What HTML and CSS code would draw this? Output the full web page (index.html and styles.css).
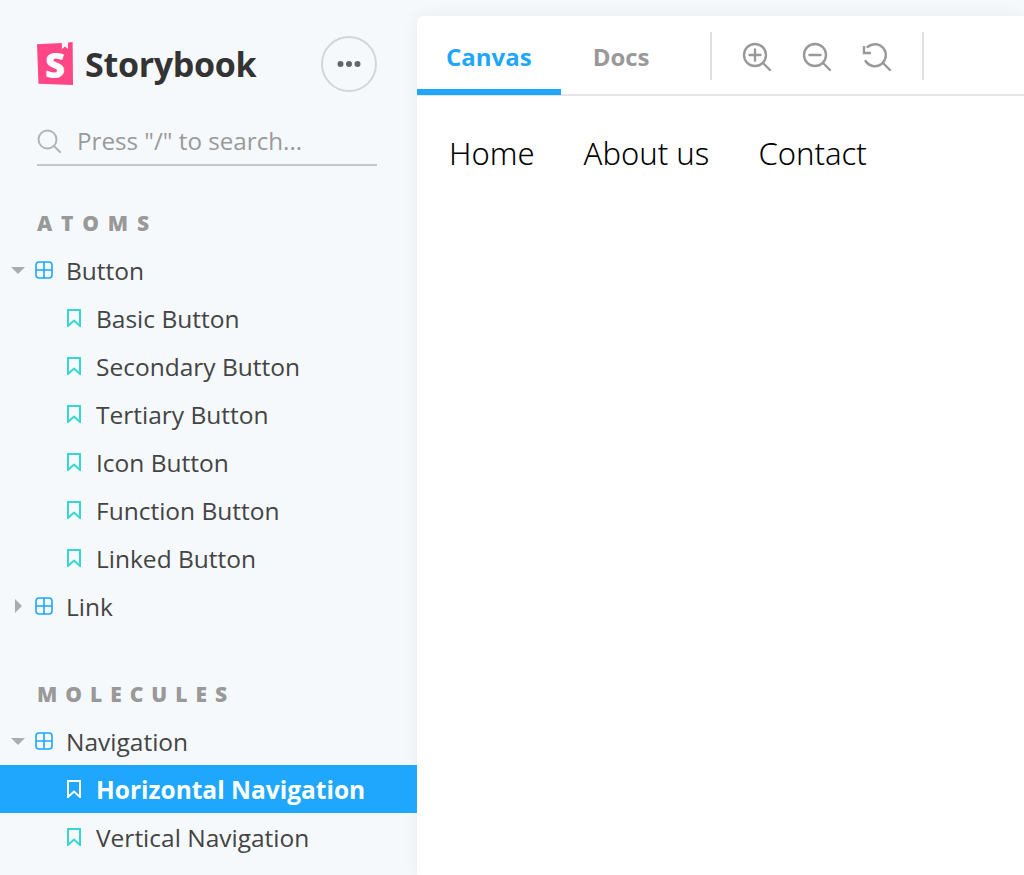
FILE: index.html
```html
<!DOCTYPE html>
<html lang="en">
<head>
    <meta charset="UTF-8">
    <meta name="viewport" content="width=device-width, initial-scale=1.0">
    <title>Storybook</title>
    <link rel="stylesheet" href="styles.css">
</head>
<body>
    <aside class="sidebar">
        <div class="brand">
            <div class="logo">
                <div class="logo-mark">S</div>
                <span class="logo-name">Storybook</span>
            </div>
            <button class="menu-btn">
                <svg width="24" height="6" viewBox="0 0 24 6"><circle cx="3.500" cy="3" r="3" fill="#666"/><circle cx="12" cy="3" r="3" fill="#666"/><circle cx="20.500" cy="3" r="3" fill="#666"/></svg>
            </button>
        </div>

        <div class="search">
            <svg width="24" height="24" viewBox="0 0 24 24" fill="none" stroke="#b3b3b3" stroke-width="2">
                <circle cx="10.500" cy="10.500" r="9"/>
                <path d="M17 17 L23 23" stroke-linecap="round"/>
            </svg>
            <span>Press "/" to search...</span>
        </div>

        <h3 class="group-title">ATOMS</h3>
        <ul class="tree">
            <li class="row">
                <span class="arrow down"></span>
                <svg class="comp" width="18" height="18" viewBox="0 0 18 18"><rect x="1" y="1" width="16" height="16" rx="3"/><path d="M9 1 V17 M1 9 H17"/></svg>
                Button
            </li>
            <li class="row child"><svg class="mark" width="14" height="18" viewBox="0 0 14 18"><path d="M1 1 H13 V17 L7 11.500 L1 17 Z"/></svg>Basic Button</li>
            <li class="row child"><svg class="mark" width="14" height="18" viewBox="0 0 14 18"><path d="M1 1 H13 V17 L7 11.500 L1 17 Z"/></svg>Secondary Button</li>
            <li class="row child"><svg class="mark" width="14" height="18" viewBox="0 0 14 18"><path d="M1 1 H13 V17 L7 11.500 L1 17 Z"/></svg>Tertiary Button</li>
            <li class="row child"><svg class="mark" width="14" height="18" viewBox="0 0 14 18"><path d="M1 1 H13 V17 L7 11.500 L1 17 Z"/></svg>Icon Button</li>
            <li class="row child"><svg class="mark" width="14" height="18" viewBox="0 0 14 18"><path d="M1 1 H13 V17 L7 11.500 L1 17 Z"/></svg>Function Button</li>
            <li class="row child"><svg class="mark" width="14" height="18" viewBox="0 0 14 18"><path d="M1 1 H13 V17 L7 11.500 L1 17 Z"/></svg>Linked Button</li>
            <li class="row">
                <span class="arrow right"></span>
                <svg class="comp" width="18" height="18" viewBox="0 0 18 18"><rect x="1" y="1" width="16" height="16" rx="3"/><path d="M9 1 V17 M1 9 H17"/></svg>
                Link
            </li>
        </ul>

        <h3 class="group-title second">MOLECULES</h3>
        <ul class="tree">
            <li class="row">
                <span class="arrow down"></span>
                <svg class="comp" width="18" height="18" viewBox="0 0 18 18"><rect x="1" y="1" width="16" height="16" rx="3"/><path d="M9 1 V17 M1 9 H17"/></svg>
                Navigation
            </li>
            <li class="row child selected"><svg class="mark" width="14" height="18" viewBox="0 0 14 18"><path d="M1 1 H13 V17 L7 11.500 L1 17 Z"/></svg>Horizontal Navigation</li>
            <li class="row child"><svg class="mark" width="14" height="18" viewBox="0 0 14 18"><path d="M1 1 H13 V17 L7 11.500 L1 17 Z"/></svg>Vertical Navigation</li>
        </ul>
    </aside>

    <main class="panel">
        <div class="toolbar">
            <a class="tab active">Canvas</a>
            <a class="tab">Docs</a>
            <span class="divider"></span>
            <div class="tools">
                <svg width="30" height="30" viewBox="0 0 30 30"><circle cx="13" cy="13" r="11"/><path d="M21 21 L28 28 M13 7.500 V18.500 M7.500 13 H18.500"/></svg>
                <svg width="30" height="30" viewBox="0 0 30 30"><circle cx="13" cy="13" r="11"/><path d="M21 21 L28 28 M7.500 13 H18.500"/></svg>
                <svg width="30" height="30" viewBox="0 0 30 30"><path d="M5.500 5 A11 11 0 1 1 3.500 19 M21 21 L28 28"/><path d="M2 4 V11 H9" class="tip"/></svg>
            </div>
            <span class="divider"></span>
        </div>
        <nav class="preview-nav">
            <a>Home</a>
            <a>About us</a>
            <a>Contact</a>
        </nav>
    </main>
</body>
</html>
```

FILE: styles.css
```css
*{
    box-sizing: border-box;
}
html,body{
    height: 100%;
}
body{
    margin: 0;
    height: 875px;
    overflow: hidden;
    display: flex;
    background: #f6f9fc;
    font-family: "Open Sans", "Noto Sans", sans-serif;
    color: #333;
}

/* SIDEBAR */
.sidebar{
    width: 417px;
    flex-shrink: 0;
    padding-top: 36px;
}
.brand{
    display: flex;
    justify-content: space-between;
    align-items: center;
    margin: 0 40px 0 37px;
}
.logo{
    display: flex;
    align-items: center;
    gap: 12px;
}
.logo-mark{
    width: 36px;
    height: 44px;
    background: #ff4785;
    clip-path: polygon(0 5%, 69% 2%, 69% 16%, 78% 10%, 86% 16%, 86% 1%, 99% 0, 100% 98%, 4% 95%);
    font-size: 35px;
    font-weight: 800;
    line-height: 45px;
    text-align: center;
    color: #fff;
}
.logo-name{
    font-size: 34px;
    font-weight: 700;
    letter-spacing: -0.3px;
    color: #333;
}
.menu-btn{
    width: 56px;
    height: 56px;
    padding: 0;
    border: 2px solid #d3d6d8;
    border-radius: 50%;
    background: transparent;
    display: flex;
    align-items: center;
    justify-content: center;
}
.search{
    display: flex;
    align-items: center;
    gap: 16px;
    height: 48px;
    margin: 26px 40px 0 37px;
    padding-bottom: 1px;
    border-bottom: 2px solid #c4c8cc;
    font-size: 24.200px;
    color: #999;
}
.group-title{
    margin: 42px 0 0 37px;
    height: 38px;
    line-height: 30px;
    font-size: 21px;
    font-weight: 800;
    letter-spacing: 0.42em;
    color: #999;
}
.group-title.second{
    margin-top: 49px;
    letter-spacing: 0.38em;
}
.tree{
    list-style: none;
    margin: 0;
    padding: 0;
}
.row{
    position: relative;
    display: flex;
    align-items: center;
    height: 48px;
    padding-left: 35px;
    font-size: 24.500px;
    color: #444;
    white-space: nowrap;
}
.comp{
    margin-right: 13px;
    fill: none;
    stroke: #1ea7fd;
    stroke-width: 1.600;
}
.child{
    padding-left: 67px;
}
.mark{
    margin-right: 15px;
    fill: none;
    stroke: #37d5d3;
    stroke-width: 2;
}
.selected{
    background: #1ea7fd;
    color: #fff;
    font-weight: 700;
}
.selected .mark{
    stroke: #fff;
}
.arrow{
    position: absolute;
    width: 0;
    height: 0;
}
.arrow.down{
    left: 11px;
    top: 21px;
    border-left: 7px solid transparent;
    border-right: 7px solid transparent;
    border-top: 7px solid #acacac;
}
.arrow.right{
    left: 15px;
    top: 17px;
    border-top: 7px solid transparent;
    border-bottom: 7px solid transparent;
    border-left: 7px solid #acacac;
}

/* MAIN PANEL */
.panel{
    flex: 1;
    margin-top: 16px;
    background: #fff;
    border-top-left-radius: 6px;
    box-shadow: 0 0 16px rgba(0,0,0,0.06);
}
.toolbar{
    display: flex;
    align-items: center;
    height: 80px;
    border-bottom: 2px solid #e6e6e6;
}
.tab{
    height: 80px;
    padding: 0 29px;
    line-height: 84px;
    font-size: 24px;
    font-weight: 700;
    color: #999;
}
.tab + .tab{
    padding-left: 32px;
}
.tab.active{
    color: #1ea7fd;
    height: 80px;
    border-bottom: 6px solid #1ea7fd;
}
.divider{
    width: 2px;
    height: 48px;
    margin-top: 2px;
    background: #e0e0e0;
}
.toolbar .tab + .divider{
    margin-left: 31px;
}
.tools{
    display: flex;
    gap: 30px;
    padding: 0 30px;
    margin-top: 4px;
}
.tools svg{
    fill: none;
    stroke: #999;
    stroke-width: 2.400;
    stroke-linecap: round;
}
.tools .tip{
    stroke-linecap: butt;
}
.preview-nav{
    display: flex;
    gap: 49px;
    padding: 36px 32px;
    font-family: "Noto Sans", "Open Sans", sans-serif;
    font-size: 31px;
    font-weight: 300;
    color: #000;
}
```
